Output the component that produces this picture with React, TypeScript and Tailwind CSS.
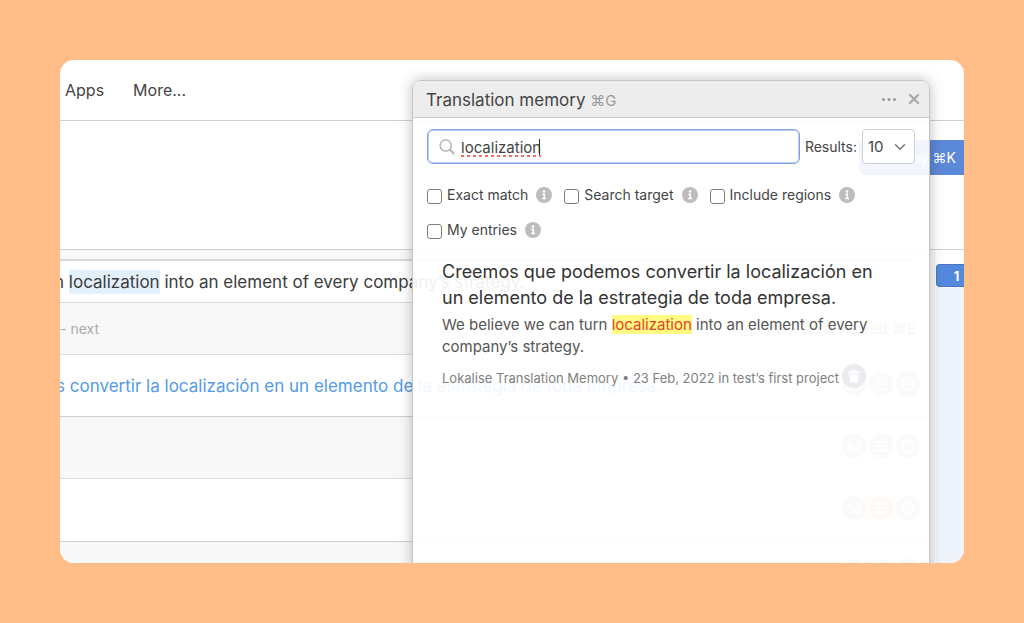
import { useState } from "react";
import type { ReactNode } from "react";
import { ChevronDown, History, X } from "lucide-react";

type FilterProps = {
  id: string;
  label: string;
};

const filters: FilterProps[] = [
  { id: "exact-match", label: "Exact match" },
  { id: "search-target", label: "Search target" },
  { id: "include-regions", label: "Include regions" },
  { id: "my-entries", label: "My entries" },
];

const GlassesIcon = () => (
  <svg viewBox="0 0 16 16" className="size-4" fill="none" stroke="currentColor" strokeWidth="1.4">
    <circle cx="4" cy="10.3" r="2.6" />
    <circle cx="12" cy="10.3" r="2.6" />
    <path d="M6.6 10c.8-.8 2-.8 2.8 0M1.5 9.500L4 3.200l1.400.5M14.500 9.500L12 3.200l-1.400.5" />
  </svg>
);

const WavesIcon = () => (
  <svg viewBox="0 0 16 16" className="size-4" fill="none" stroke="currentColor" strokeWidth="1.6">
    <path d="M1.500 3.500q1.600 1.800 3.200.5t3.300 0 3.300 0 3.200-.5" />
    <path d="M1.500 7.700q1.600 1.800 3.200.5t3.300 0 3.300 0 3.200-.5" />
    <path d="M1.500 11.900q1.600 1.800 3.200.5t3.300 0 3.300 0 3.200-.5" />
  </svg>
);

const RoundButton = ({
  label,
  active = false,
  children,
}: {
  label: string;
  active?: boolean;
  children: ReactNode;
}) => (
  <button
    type="button"
    aria-label={label}
    className={`flex size-6 items-center justify-center rounded-full text-white ${
      active ? "bg-[#f0b080]" : "bg-[#b8b8b8]"
    }`}
  >
    {children}
  </button>
);

const RowActions = ({ active = false }: { active?: boolean }) => (
  <div className="ml-auto flex gap-[3px] pr-2 pb-1">
    <RoundButton label="Review">
      <GlassesIcon />
    </RoundButton>
    <RoundButton label="Translation memory" active={active}>
      <WavesIcon />
    </RoundButton>
    <RoundButton label="History">
      <History size={16} strokeWidth={2} />
    </RoundButton>
  </div>
);

const InfoIcon = () => (
  <svg viewBox="0 0 16 16" className="ml-2 size-4 shrink-0" aria-hidden="true">
    <circle cx="8" cy="8" r="8" fill="#bdbdbd" />
    <circle cx="8" cy="4.500" r="1.200" fill="#fff" />
    <path d="M6.400 7.200h1.900v4M6.200 11.400h3.800" stroke="#fff" strokeWidth="1.500" fill="none" />
  </svg>
);

const Filter = ({ id, label }: FilterProps) => (
  <div className="flex h-5 items-center">
    <input
      id={id}
      type="checkbox"
      className="mt-[2px] size-[15px] appearance-none rounded-[3px] border border-[#7d7d7d] bg-white checked:bg-[#5c88d8]"
    />
    <label htmlFor={id} className="ml-[5px] text-sm text-[#444]">
      {label}
    </label>
    <InfoIcon />
  </div>
);

const Editor = () => (
  <div className="flex h-full flex-col">
    <header className="flex h-[61px] shrink-0 items-center gap-[29px] border-b border-[#cfcfcf] px-[5px] text-base text-[#444]">
      <a href="#apps">Apps</a>
      <a href="#more">More...</a>
    </header>

    <div className="flex h-[129px] shrink-0 items-start justify-end border-b border-[#cfcfcf] pt-[19px]">
      <button
        type="button"
        className="h-[35px] w-[105px] rounded-l-md bg-[#5c88d8] pr-2 text-right text-sm text-white"
      >
        Add key ⌘K
      </button>
    </div>

    <div className="flex min-h-0 flex-1 bg-[#f8f8f8]">
      <main className="min-w-0 flex-1">
        <div className="h-[9px]" />
        <div className="mr-[14px] flex h-11 items-center rounded-r border-t-2 border-r border-b border-[#d8d8d8] bg-white pt-[2px]">
          <p className="-ml-[6px] text-[17px] whitespace-nowrap text-[#3c3c3c]">
            n <mark className="bg-[#e3f1fd] py-[2px] text-inherit">localization</mark> into an
            element of every company’s strategy.
          </p>
        </div>
        <div className="flex h-[52px] items-center border-b border-[#dedede] text-sm text-[#aaa]">
          <span>- next</span>
          <label className="ml-auto flex items-center gap-2 pr-3 text-[15px] text-[#888]">
            <input
              type="checkbox"
              className="size-[15px] appearance-none rounded-[3px] border border-[#888]"
            />
            Mark as reviewed ⌘E
          </label>
        </div>
        <div className="flex h-[62px] items-center border-b border-[#cfcfcf] bg-white">
          <p className="-ml-1 pt-[2px] text-[17px] whitespace-nowrap text-[#549ae4]">
            s convertir la localización en un elemento de la estrategia de toda empresa.
          </p>
          <RowActions />
        </div>
        <div className="flex h-[62px] items-center border-b border-[#dcdcdc]">
          <RowActions />
        </div>
        <div className="flex h-[63px] items-center border-b border-[#cfcfcf] bg-white">
          <RowActions active />
        </div>
        <div className="flex h-[62px] items-center">
          <RowActions />
        </div>
      </main>

      <aside className="ml-2 flex w-7 flex-col">
        <div className="h-[14px] bg-white" />
        <button
          type="button"
          className="h-[23px] rounded-l-sm border border-r-0 border-[#4a76c4] bg-[#5389dc] pl-3 text-center text-[13px] leading-5 font-bold text-white"
        >
          1
        </button>
        <div className="flex-1 bg-[#eef3fc]" />
      </aside>
    </div>
  </div>
);

const TranslationMemory = () => {
  const [query, setQuery] = useState("localization");

  return (
    <section className="absolute top-5 right-[34px] -bottom-5 w-[518px] rounded-t-lg border border-[#c6c6c6] bg-white/92 shadow-[0_0_14px_rgba(0,0,0,0.25)]">
      <div className="flex h-[37px] items-center rounded-t-[7px] border-b border-[#cdcdcd] bg-[#ededed] pr-[7px] pl-[13px]">
        <h2 className="pt-[2px] text-[17px] leading-6 text-[#444]">
          Translation memory <span className="text-[15px] text-[#999]">⌘G</span>
        </h2>
        <button type="button" aria-label="More options" className="ml-auto text-[#999]">
          <svg viewBox="0 0 16 16" className="size-4" fill="currentColor">
            <circle cx="2.500" cy="8.500" r="1.500" />
            <circle cx="8" cy="8.500" r="1.500" />
            <circle cx="13.500" cy="8.500" r="1.500" />
          </svg>
        </button>
        <button type="button" aria-label="Close" className="ml-[9px] text-[#aaa]">
          <X size={16} strokeWidth={3.6} />
        </button>
      </div>

      <div className="px-[14px] pt-[11px]">
        <div className="flex items-center">
          <div className="relative min-w-0 flex-1">
            <svg
              viewBox="0 0 16 16"
              className="absolute top-[10px] left-3 size-4"
              fill="none"
              stroke="#b5b5b5"
              strokeWidth="1.500"
              aria-hidden="true"
            >
              <circle cx="6.700" cy="6.500" r="5.600" />
              <path d="M10.700 10.500l4.600 4.600" strokeWidth="2" />
            </svg>
            <input
              type="text"
              aria-label="Search translation memory"
              value={query}
              onChange={(e) => setQuery(e.target.value)}
              className="h-[35px] w-full rounded-md border border-[#7f9fdf] bg-white pt-[2px] pl-[33px] text-[15px] text-[#444] underline decoration-[#f26d64] decoration-dotted decoration-3 underline-offset-2 shadow-[inset_0_0_0_1px_#bccff3] outline-none"
            />
            <span className="absolute top-[10px] left-[112px] h-4 w-px bg-[#333]" />
          </div>
          <label htmlFor="results" className="mx-[5px] text-sm text-[#444]">
            Results:
          </label>
          <div className="relative">
            <select
              id="results"
              defaultValue="10"
              className="h-[35px] w-[53px] appearance-none rounded border border-[#cfcfcf] bg-white pt-px pl-[5px] text-[15px] text-[#444]"
            >
              <option>10</option>
              <option>25</option>
              <option>50</option>
            </select>
            <ChevronDown
              size={18}
              className="pointer-events-none absolute top-[9px] right-[6px] text-[#777]"
            />
          </div>
        </div>

        <div className="mt-[21px] flex flex-wrap gap-x-3 gap-y-[15px]">
          {filters.map((filter) => (
            <Filter key={filter.id} {...filter} />
          ))}
        </div>
      </div>

      <article className="mt-[19px] pr-[35px] pl-[29px]">
        <p className="text-lg leading-[26px] text-[#333]">
          Creemos que podemos convertir la localización en un elemento de la estrategia de toda
          empresa.
        </p>
        <p className="mt-[3px] text-[15px] leading-[22px] text-[#555]">
          We believe we can turn{" "}
          <mark className="bg-[#fffb83] text-[#e8402a]">localization</mark> into an element of
          every company’s strategy.
        </p>
        <div className="mt-[6px] flex items-start gap-[3px] text-[13px] leading-7 whitespace-nowrap text-[#808080]">
          <span>Lokalise Translation Memory • 23 Feb, 2022 in test’s first project</span>
          <button
            type="button"
            aria-label="Delete entry"
            className="flex size-6 shrink-0 items-center justify-center rounded-full bg-[#e9ebee] text-white"
          >
            <svg viewBox="0 0 16 16" className="size-4" fill="currentColor">
              <path d="M5.500 2h5v1.500H14v2H2v-2h3.500zM3.300 6.500h9.400l-.8 8H4.100z" />
            </svg>
          </button>
        </div>
      </article>
    </section>
  );
};

const App = () => {
  return (
    <div className="flex h-screen bg-[#ffbd88] p-[60px] font-['Inter','DejaVu_Sans',sans-serif]">
      <div className="relative min-w-0 flex-1 overflow-hidden rounded-[14px] bg-white">
        <Editor />
        <TranslationMemory />
      </div>
    </div>
  );
};

export default App;
